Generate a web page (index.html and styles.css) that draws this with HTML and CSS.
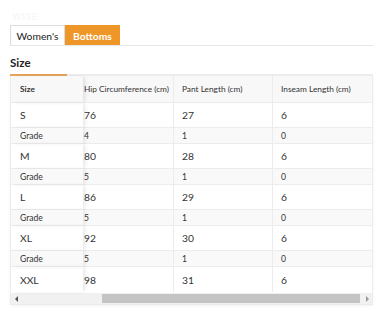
FILE: index.html
```html
<!DOCTYPE html>
<html>
<head>
<meta charset="utf-8">
<link rel="stylesheet" href="styles.css">
</head>
<body>
<div class="page">
  <div class="faint-logo">WISE</div>
  <div class="tabs">
    <div class="tab">Women's</div>
    <div class="tab active">Bottoms</div>
  </div>
  <div class="section-title"><span class="title-text">Size</span></div>
  <div class="table-wrap">
    <div class="grid">
      <div class="cell head fixed">Size</div>
      <div class="cell head scrolled">Hip Circumference (cm)</div>
      <div class="cell head">Pant Length (cm)</div>
      <div class="cell head">Inseam Length (cm)</div>

      <div class="cell main fixed">S</div>
      <div class="cell main scrolled">76</div>
      <div class="cell main">27</div>
      <div class="cell main">6</div>
      <div class="cell grade fixed">Grade</div>
      <div class="cell grade scrolled">4</div>
      <div class="cell grade">1</div>
      <div class="cell grade">0</div>

      <div class="cell main fixed">M</div>
      <div class="cell main scrolled">80</div>
      <div class="cell main">28</div>
      <div class="cell main">6</div>
      <div class="cell grade fixed">Grade</div>
      <div class="cell grade scrolled">5</div>
      <div class="cell grade">1</div>
      <div class="cell grade">0</div>

      <div class="cell main fixed">L</div>
      <div class="cell main scrolled">86</div>
      <div class="cell main">29</div>
      <div class="cell main">6</div>
      <div class="cell grade fixed">Grade</div>
      <div class="cell grade scrolled">5</div>
      <div class="cell grade">1</div>
      <div class="cell grade">0</div>

      <div class="cell main fixed">XL</div>
      <div class="cell main scrolled">92</div>
      <div class="cell main">30</div>
      <div class="cell main">6</div>
      <div class="cell grade fixed">Grade</div>
      <div class="cell grade scrolled">5</div>
      <div class="cell grade">1</div>
      <div class="cell grade">0</div>

      <div class="cell main fixed last">XXL</div>
      <div class="cell main scrolled last">98</div>
      <div class="cell main last">31</div>
      <div class="cell main last">6</div>
    </div>
    <div class="scrollbar">
      <span class="arrow left"></span>
      <div class="track"><div class="thumb"></div></div>
      <span class="arrow right"></span>
    </div>
  </div>
</div>
</body>
</html>
```
FILE: styles.css
```css
html, body {
  margin: 0;
  padding: 0;
  background: #fff;
}
body {
  font-family: Lato, "Open Sans", sans-serif;
  color: #333;
}
.page {
  position: relative;
  padding: 0 11px 0 10px;
  height: 311px;
  overflow: hidden;
}
.faint-logo {
  position: absolute;
  left: 12px;
  top: 11px;
  font-size: 9px;
  font-weight: 700;
  color: #f7f7f7;
  letter-spacing: 1px;
}
.tabs {
  display: flex;
  margin-top: 25px;
  border-bottom: 1px solid #e6e6e6;
}
.tab {
  height: 20px;
  line-height: 20px;
  font-size: 10.3px;
  border: 1px solid #dcdcdc;
  border-bottom: none;
  box-sizing: border-box;
  width: 55px;
  text-align: center;
  background: #fff;
  color: #222;
}
.tab.active {
  background: #ef9629;
  border-color: #ef9629;
  color: #fff;
  font-weight: 700;
}
.section-title {
  display: flex;
  margin-top: 9px;
  border-bottom: 2px solid #eeeeee;
}
.title-text {
  display: block;
  width: 57px;
  height: 19px;
  line-height: 15px;
  font-size: 11.5px;
  font-weight: 700;
  color: #222;
  margin-bottom: -2px;
  border-bottom: 2px solid #e7a45a;
}
.table-wrap {
  border: 1px solid #ececec;
  border-top: none;
  box-shadow: 0 1px 3px rgba(0,0,0,0.05);
}
.grid {
  display: grid;
  grid-template-columns: 72px 91px 99px 1fr;
}
.cell {
  font-size: 10.3px;
  padding-left: 8px;
  border-bottom: 1px solid #ececec;
  border-right: 1px solid #ececec;
  display: flex;
  align-items: center;
  box-sizing: border-box;
  color: #333;
  white-space: nowrap;
}
.cell:nth-child(4n) {
  border-right: none;
}
.head {
  height: 27px;
  background: #f8f8f8;
  font-size: 8.3px;
  color: #333;
}
.head.fixed {
  font-weight: 700;
}
.main {
  height: 25px;
}
.grade {
  height: 16px;
  background: #f9f9f9;
  font-size: 8.6px;
}
.scrolled {
  padding-left: 1px;
}
.fixed {
  position: relative;
  z-index: 1;
  padding-left: 9px;
  border-right: none;
  box-shadow: 3px 0 4px -1px rgba(0,0,0,0.10);
}
.last {
  border-bottom: none;
  height: 25px;
}
.scrollbar {
  display: flex;
  align-items: center;
  height: 11px;
  background: #f1f1f1;
  margin-top: 1px;
}
.arrow {
  width: 10px;
  height: 11px;
  display: flex;
  align-items: center;
  justify-content: center;
}
.arrow.left::before {
  content: "";
  border-top: 3px solid transparent;
  border-bottom: 3px solid transparent;
  border-right: 3px solid #555;
}
.arrow.right::before {
  content: "";
  border-top: 3px solid transparent;
  border-bottom: 3px solid transparent;
  border-left: 3px solid #999;
}
.track {
  flex: 1;
  height: 9px;
  padding-left: 81px;
}
.thumb {
  height: 9px;
  background: #c4c4c4;
  margin-right: 2px;
}
```
